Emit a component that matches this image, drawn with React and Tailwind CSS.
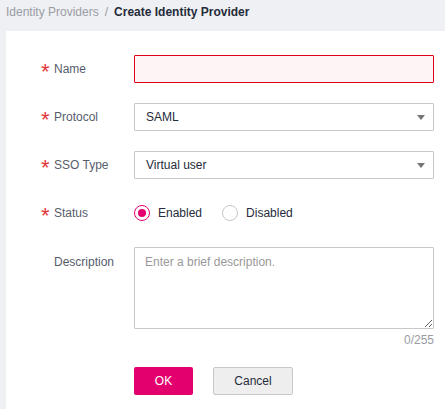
import React from 'react'

const Label = ({ required, children }) => (
  <div className="w-[92px] shrink-0 flex items-center h-[28px]">
    <span className="w-[12px] h-[28px] flex items-center">
      {required && (
        <span className="text-[#e5373c] text-[22px] leading-none translate-y-[3px] -translate-x-[1px]">*</span>
      )}
    </span>
    <span className="text-[#575d6c]">{children}</span>
  </div>
)

const Select = ({ value }) => (
  <div className="flex-1 h-[28px] border border-[#c8c8c8] bg-white flex items-center justify-between pl-[11px] pr-[8px] rounded-[1px]">
    <span className="text-[#252b3a]">{value}</span>
    <span className="w-0 h-0 border-l-[4px] border-r-[4px] border-t-[5px] border-l-transparent border-r-transparent border-t-[#757575]" />
  </div>
)

const Radio = ({ checked, label }) => (
  <label className="flex items-center gap-[8px] mr-[20px]">
    <span
      className={`w-[16px] h-[16px] rounded-full border flex items-center justify-center ${
        checked ? 'border-[#e3006e]' : 'border-[#c8c8c8]'
      }`}
    >
      {checked && <span className="w-[8px] h-[8px] rounded-full bg-[#e3006e]" />}
    </span>
    <span className="text-[#252b3a]">{label}</span>
  </label>
)

export default function App() {
  return (
    <div
      className="w-[445px] h-[409px] bg-[#eff0f4] overflow-hidden text-[12px]"
      style={{ fontFamily: '"Liberation Sans", Arial, sans-serif' }}
    >
      <div className="h-[24px] flex items-center pl-[6px] text-[12px]">
        <span className="text-[#9a9ca3]">Identity Providers</span>
        <span className="text-[#9a9ca3] mx-[6px]">/</span>
        <span className="text-[#252b3a] font-bold">Create Identity Provider</span>
      </div>

      <div className="mt-[7px] ml-[6px] bg-white h-[400px] pt-[24px] pl-[36px] pr-[11px]">
        <div className="flex flex-col gap-[20px]">
          <div className="flex">
            <Label required>Name</Label>
            <div className="flex-1 h-[28px] border border-[#e0001a] bg-[#fdf5f5] rounded-[1px]" />
          </div>

          <div className="flex">
            <Label required>Protocol</Label>
            <Select value="SAML" />
          </div>

          <div className="flex">
            <Label required>SSO Type</Label>
            <Select value="Virtual user" />
          </div>

          <div className="flex">
            <Label required>Status</Label>
            <div className="flex items-center h-[28px]">
              <Radio checked label="Enabled" />
              <Radio label="Disabled" />
            </div>
          </div>

          <div className="flex">
            <div className="w-[92px] shrink-0 pt-[6px] flex">
              <span className="w-[12px]" />
              <span className="text-[#575d6c]">Description</span>
            </div>
            <div className="flex-1 flex flex-col">
              <textarea
                className="h-[82px] border border-[#c8c8c8] px-[10px] py-[5px] text-[12px] outline-none placeholder:text-[#999999] rounded-[1px]"
                placeholder="Enter a brief description."
              />
              <div className="text-right text-[#9a9ca3] leading-[14px] mt-[4px]">0/255</div>
            </div>
          </div>
        </div>

        <div className="flex gap-[20px] mt-[20px] ml-[92px]">
          <button className="w-[59px] h-[28px] bg-[#e3006e] text-white text-[12px] rounded-[2px]">OK</button>
          <button className="w-[80px] h-[28px] bg-[#eeeeee] border border-[#c8c8c8] text-[#252b3a] text-[12px] rounded-[2px]">
            Cancel
          </button>
        </div>
      </div>
    </div>
  )
}
